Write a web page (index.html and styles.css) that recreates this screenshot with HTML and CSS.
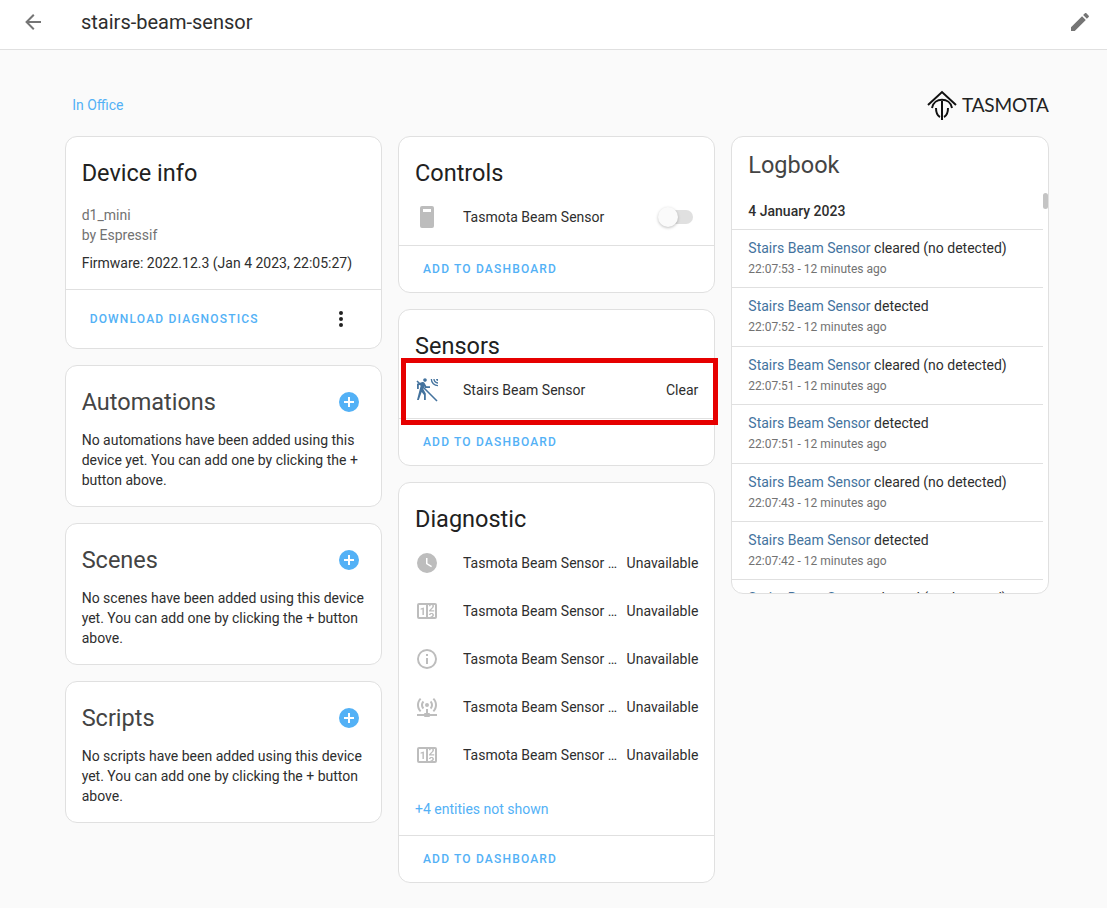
FILE: index.html
```html
<!DOCTYPE html>
<html lang="en">
<head>
    <meta charset="UTF-8">
    <meta name="viewport" content="width=device-width, initial-scale=1.0">
    <title>stairs-beam-sensor</title>
    <link rel="stylesheet" href="styles.css">
</head>
<body>

<header class="topbar">
    <svg class="topbar-icon" viewBox="0 0 24 24"><path d="M20,11V13H8L13.5,18.5L12.08,19.92L4.16,12L12.08,4.08L13.5,5.5L8,11H20Z"/></svg>
    <h1 class="topbar-title">stairs-beam-sensor</h1>
    <svg class="topbar-icon topbar-edit" viewBox="0 0 24 24"><path d="M20.71,7.04C21.1,6.65 21.1,6 20.71,5.63L18.37,3.29C18,2.9 17.35,2.9 16.96,3.29L15.12,5.12L18.87,8.87M3,17.25V21H6.75L17.81,9.93L14.06,6.18L3,17.25Z"/></svg>
</header>

<main class="page">
    <div class="page-top">
        <a class="area-link">In Office</a>
        <div class="logo">
            <svg class="logo-mark" viewBox="0 0 30 30">
                <path class="logo-line" d="M1,15 L15,2 L29,15"/>
                <path class="logo-line" d="M5,18 C7,7 23,7 25,18"/>
                <path class="logo-line" d="M9,18 C9,23 11,26 13,27 M21,18 C21,23 19,26 17,27"/>
                <path class="logo-line" d="M15,11 V30"/>
            </svg>
            <span class="logo-text">TASMOTA</span>
        </div>
    </div>

    <div class="columns">
        <div class="column">
            <section class="card">
                <h2 class="card-title">Device info</h2>
                <div class="device-text">
                    <div class="device-meta">d1_mini</div>
                    <div class="device-meta">by Espressif</div>
                    <div class="firmware">Firmware: 2022.12.3 (Jan 4 2023, 22:05:27)</div>
                </div>
                <div class="card-actions device-actions">
                    <a class="action-btn">Download diagnostics</a>
                    <svg class="dots" viewBox="0 0 24 24"><path d="M12,16A2,2 0 0,1 14,18A2,2 0 0,1 12,20A2,2 0 0,1 10,18A2,2 0 0,1 12,16M12,10A2,2 0 0,1 14,12A2,2 0 0,1 12,14A2,2 0 0,1 10,12A2,2 0 0,1 12,10M12,4A2,2 0 0,1 14,6A2,2 0 0,1 12,8A2,2 0 0,1 10,6A2,2 0 0,1 12,4Z"/></svg>
                </div>
            </section>

            <section class="card">
                <div class="card-head">
                    <h2 class="card-title muted">Automations</h2>
                    <svg class="add-icon" viewBox="0 0 24 24"><path d="M17,13H13V17H11V13H7V11H11V7H13V11H17M12,2A10,10 0 0,0 2,12A10,10 0 0,0 12,22A10,10 0 0,0 22,12A10,10 0 0,0 12,2Z"/></svg>
                </div>
                <p class="empty-text">No automations have been added using this device yet. You can add one by clicking the + button above.</p>
            </section>

            <section class="card">
                <div class="card-head">
                    <h2 class="card-title muted">Scenes</h2>
                    <svg class="add-icon" viewBox="0 0 24 24"><path d="M17,13H13V17H11V13H7V11H11V7H13V11H17M12,2A10,10 0 0,0 2,12A10,10 0 0,0 12,22A10,10 0 0,0 22,12A10,10 0 0,0 12,2Z"/></svg>
                </div>
                <p class="empty-text">No scenes have been added using this device yet. You can add one by clicking the + button above.</p>
            </section>

            <section class="card">
                <div class="card-head">
                    <h2 class="card-title muted">Scripts</h2>
                    <svg class="add-icon" viewBox="0 0 24 24"><path d="M17,13H13V17H11V13H7V11H11V7H13V11H17M12,2A10,10 0 0,0 2,12A10,10 0 0,0 12,22A10,10 0 0,0 22,12A10,10 0 0,0 12,2Z"/></svg>
                </div>
                <p class="empty-text">No scripts have been added using this device yet. You can add one by clicking the + button above.</p>
            </section>
        </div>

        <div class="column">
            <section class="card">
                <h2 class="card-title">Controls</h2>
                <div class="entities">
                    <div class="entity">
                        <svg class="entity-icon" viewBox="0 0 24 24"><path fill-rule="evenodd" d="M7,1H17A2,2 0 0,1 19,3V21A2,2 0 0,1 17,23H7A2,2 0 0,1 5,21V3A2,2 0 0,1 7,1M8,4V7H16V4H8Z"/></svg>
                        <span class="entity-name">Tasmota Beam Sensor</span>
                        <span class="switch"></span>
                    </div>
                </div>
                <div class="card-actions"><a class="action-btn">Add to dashboard</a></div>
            </section>

            <section class="card">
                <h2 class="card-title">Sensors</h2>
                <div class="entities">
                    <div class="entity entity-marked">
                        <svg class="entity-icon beam-icon" viewBox="0 0 24 24">
                            <path d="M10,0.2C9,0.2 8.2,1 8.2,2C8.2,3 9,3.8 10,3.8C11,3.8 11.8,3 11.8,2C11.8,1 11,0.2 10,0.2M15.67,1A7.33,7.33 0 0,0 23,8.33V7A6,6 0 0,1 17,1H15.67M18.33,1C18.33,3.58 20.42,5.67 23,5.67V4.33C21.16,4.33 19.67,2.84 19.67,1H18.33M21,1A2,2 0 0,0 23,3V1H21M7.92,4.03C7.75,4.03 7.58,4.06 7.42,4.11L2,5.8V11H3.8V7.33L5.91,6.67L2,22H3.8L6.67,13.89L9,17V22H10.8V15.59L8.31,11.05L9.04,8.18L10.12,10H15V8.2H11.38L9.38,4.87C9.08,4.37 8.54,4.03 7.92,4.03Z"/>
                            <path class="beam-slash" d="M2,3 L22,23"/>
                        </svg>
                        <span class="entity-name">Stairs Beam Sensor</span>
                        <span class="entity-state">Clear</span>
                        <span class="highlight"></span>
                    </div>
                </div>
                <div class="card-actions"><a class="action-btn">Add to dashboard</a></div>
            </section>

            <section class="card">
                <h2 class="card-title">Diagnostic</h2>
                <div class="entities">
                    <div class="entity">
                        <svg class="entity-icon" viewBox="0 0 24 24"><path d="M12,2A10,10 0 0,0 2,12A10,10 0 0,0 12,22A10,10 0 0,0 22,12A10,10 0 0,0 12,2M16.2,16.2L11,13V7H12.5V12.2L17,14.9L16.2,16.2Z"/></svg>
                        <span class="entity-name">Tasmota Beam Sensor …</span>
                        <span class="entity-state">Unavailable</span>
                    </div>
                    <div class="entity">
                        <svg class="entity-icon" viewBox="0 0 24 24"><path d="M4,4H20A2,2 0 0,1 22,6V18A2,2 0 0,1 20,20H4A2,2 0 0,1 2,18V6A2,2 0 0,1 4,4M4,6V18H11V6H4M20,18V6H18.76C19,6.54 18.95,7.07 18.95,7.13C18.88,7.8 18.41,8.5 18.24,8.75L15.91,11.3L19.23,11.28L19.24,12.5L14.04,12.47L14,11.47C14,11.47 17.05,8.24 17.2,7.95C17.34,7.67 17.91,6 16.5,6C15.27,6.05 15.41,7.3 15.41,7.3L13.87,7.31C13.87,7.31 13.88,6.65 14.25,6H13V18H15.58L15.57,17.14L16.54,17.13C16.54,17.13 17.45,16.97 17.46,16.08C17.5,15.08 16.65,15.08 16.5,15.08C16.37,15.08 15.43,15.13 15.43,15.95H13.91C13.91,15.95 13.95,13.89 16.5,13.89C19.1,13.89 18.96,15.91 18.96,15.91C18.96,15.91 19,17.16 17.85,17.63L18.37,18H20M8.92,16H7.42V10.2L5.62,10.76V9.53L8.76,8.41H8.92V16Z"/></svg>
                        <span class="entity-name">Tasmota Beam Sensor …</span>
                        <span class="entity-state">Unavailable</span>
                    </div>
                    <div class="entity">
                        <svg class="entity-icon" viewBox="0 0 24 24"><path d="M11,9H13V7H11M12,20C7.59,20 4,16.41 4,12C4,7.59 7.59,4 12,4C16.41,4 20,7.59 20,12C20,16.41 16.41,20 12,20M12,2A10,10 0 0,0 2,12A10,10 0 0,0 12,22A10,10 0 0,0 22,12A10,10 0 0,0 12,2M11,17H13V11H11V17Z"/></svg>
                        <span class="entity-name">Tasmota Beam Sensor …</span>
                        <span class="entity-state">Unavailable</span>
                    </div>
                    <div class="entity">
                        <svg class="entity-icon" viewBox="0 0 24 24"><path d="M4.93,2.93C3.12,4.74 2,7.24 2,10C2,12.76 3.12,15.26 4.93,17.07L6.34,15.66C4.89,14.22 4,12.22 4,10C4,7.79 4.89,5.78 6.34,4.34L4.93,2.93M19.07,2.93L17.66,4.34C19.11,5.78 20,7.79 20,10C20,12.22 19.11,14.22 17.66,15.66L19.07,17.07C20.88,15.26 22,12.76 22,10C22,7.24 20.88,4.74 19.07,2.93M7.76,5.76C6.67,6.85 6,8.35 6,10C6,11.65 6.67,13.15 7.76,14.24L9.17,12.83C8.45,12.11 8,11.11 8,10C8,8.89 8.45,7.89 9.17,7.17L7.76,5.76M16.24,5.76L14.83,7.17C15.55,7.89 16,8.89 16,10C16,11.11 15.55,12.11 14.83,12.83L16.24,14.24C17.33,13.15 18,11.65 18,10C18,8.35 17.33,6.85 16.24,5.76M12,8A2,2 0 0,0 10,10A2,2 0 0,0 12,12A2,2 0 0,0 14,10A2,2 0 0,0 12,8M11,14V18H10A1,1 0 0,0 9,19H2V21H9A1,1 0 0,0 10,22H14A1,1 0 0,0 15,21H22V19H15A1,1 0 0,0 14,18H13V14H11Z"/></svg>
                        <span class="entity-name">Tasmota Beam Sensor …</span>
                        <span class="entity-state">Unavailable</span>
                    </div>
                    <div class="entity">
                        <svg class="entity-icon" viewBox="0 0 24 24"><path d="M4,4H20A2,2 0 0,1 22,6V18A2,2 0 0,1 20,20H4A2,2 0 0,1 2,18V6A2,2 0 0,1 4,4M4,6V18H11V6H4M20,18V6H18.76C19,6.54 18.95,7.07 18.95,7.13C18.88,7.8 18.41,8.5 18.24,8.75L15.91,11.3L19.23,11.28L19.24,12.5L14.04,12.47L14,11.47C14,11.47 17.05,8.24 17.2,7.95C17.34,7.67 17.91,6 16.5,6C15.27,6.05 15.41,7.3 15.41,7.3L13.87,7.31C13.87,7.31 13.88,6.65 14.25,6H13V18H15.58L15.57,17.14L16.54,17.13C16.54,17.13 17.45,16.97 17.46,16.08C17.5,15.08 16.65,15.08 16.5,15.08C16.37,15.08 15.43,15.13 15.43,15.95H13.91C13.91,15.95 13.95,13.89 16.5,13.89C19.1,13.89 18.96,15.91 18.96,15.91C18.96,15.91 19,17.16 17.85,17.63L18.37,18H20M8.92,16H7.42V10.2L5.62,10.76V9.53L8.76,8.41H8.92V16Z"/></svg>
                        <span class="entity-name">Tasmota Beam Sensor …</span>
                        <span class="entity-state">Unavailable</span>
                    </div>
                    <a class="more-link">+4 entities not shown</a>
                </div>
                <div class="card-actions"><a class="action-btn">Add to dashboard</a></div>
            </section>
        </div>

        <div class="column">
            <section class="card logbook">
                <h2 class="card-title muted">Logbook</h2>
                <div class="log-scroll">
                    <div class="log-date">4 January 2023</div>
                    <div class="log-row">
                        <div class="log-line"><a class="log-name">Stairs Beam Sensor</a> cleared (no detected)</div>
                        <div class="log-time">22:07:53 - 12 minutes ago</div>
                    </div>
                    <div class="log-row">
                        <div class="log-line"><a class="log-name">Stairs Beam Sensor</a> detected</div>
                        <div class="log-time">22:07:52 - 12 minutes ago</div>
                    </div>
                    <div class="log-row">
                        <div class="log-line"><a class="log-name">Stairs Beam Sensor</a> cleared (no detected)</div>
                        <div class="log-time">22:07:51 - 12 minutes ago</div>
                    </div>
                    <div class="log-row">
                        <div class="log-line"><a class="log-name">Stairs Beam Sensor</a> detected</div>
                        <div class="log-time">22:07:51 - 12 minutes ago</div>
                    </div>
                    <div class="log-row">
                        <div class="log-line"><a class="log-name">Stairs Beam Sensor</a> cleared (no detected)</div>
                        <div class="log-time">22:07:43 - 12 minutes ago</div>
                    </div>
                    <div class="log-row">
                        <div class="log-line"><a class="log-name">Stairs Beam Sensor</a> detected</div>
                        <div class="log-time">22:07:42 - 12 minutes ago</div>
                    </div>
                    <div class="log-row">
                        <div class="log-line"><a class="log-name">Stairs Beam Sensor</a> cleared (no detected)</div>
                        <div class="log-time">22:07:41 - 12 minutes ago</div>
                    </div>
                    <span class="log-thumb"></span>
                </div>
            </section>
        </div>
    </div>
</main>

</body>
</html>
```

FILE: styles.css
```css
* {
    box-sizing: border-box;
}
body {
    margin: 0;
    height: 908px;
    overflow: hidden;
    font-family: Roboto, "Liberation Sans", sans-serif;
    font-size: 14px;
    line-height: 20px;
    color: #2e2e2e;
    background-color: #fafafa;
}

/* top bar */
.topbar {
    display: flex;
    align-items: center;
    height: 50px;
    padding: 0 15px 6px 21px;
    background-color: #fff;
    border-bottom: 1px solid #e0e0e0;
}
.topbar-icon {
    width: 24px;
    height: 24px;
    fill: #757575;
    flex: none;
}
.topbar-title {
    margin: 0 0 0 36px;
    font-size: 20px;
    font-weight: 400;
    line-height: 24px;
}
.topbar-edit {
    margin-left: auto;
}

/* page */
.page {
    padding-left: 64.67px;
}
.page-top {
    display: flex;
    justify-content: space-between;
    align-items: center;
    width: 984px;
    height: 86px;
    padding: 40px 0 16px 7.5px;
}
.area-link {
    color: #53b1f6;
}
.logo {
    display: flex;
    align-items: center;
    gap: 5px;
}
.logo-mark {
    width: 30px;
    height: 30px;
}
.logo-line {
    fill: none;
    stroke: #111;
    stroke-width: 2;
}
.logo-text {
    font-family: Lato, sans-serif;
    font-size: 19px;
    font-weight: 400;
    letter-spacing: -0.2px;
    line-height: 30px;
    color: #222;
}
.columns {
    display: grid;
    grid-template-columns: repeat(3, 317.33px);
    gap: 16px;
    align-items: start;
}
.column {
    display: flex;
    flex-direction: column;
    gap: 16px;
}

/* cards */
.card {
    background-color: #fff;
    border: 1px solid #e0e0e0;
    border-radius: 12px;
}
.card-title {
    margin: 0;
    padding: 20px 16px 0;
    font-size: 23.5px;
    font-weight: 400;
    line-height: 32px;
    color: #212121;
}
.muted {
    color: #444;
}
.card-head {
    display: flex;
    justify-content: space-between;
    align-items: flex-end;
}
.add-icon {
    width: 24px;
    height: 24px;
    margin: 0 20px 4px 0;
    fill: #53b1f6;
}
.empty-text {
    margin: 12px 0 16px;
    padding: 0 16px;
}
.device-text {
    padding: 16px 16px 16px;
}
.device-meta {
    color: #727272;
}
.firmware {
    margin-top: 8px;
}
.card-actions {
    display: flex;
    align-items: center;
    height: 47px;
    padding: 0 24px;
    border-top: 1px solid #e0e0e0;
}
.device-actions {
    justify-content: space-between;
    height: 59px;
    padding: 0 28px 0 24px;
}
.action-btn {
    font-size: 12px;
    font-weight: 500;
    letter-spacing: 1.18px;
    text-transform: uppercase;
    color: #53b1f6;
}
.dots {
    width: 24px;
    height: 24px;
    fill: #212121;
}

/* entity rows */
.entities {
    display: flex;
    flex-direction: column;
    gap: 8px;
    padding: 8px 16px;
}
.entity {
    position: relative;
    display: flex;
    align-items: center;
    height: 40px;
}
.entity-icon {
    flex: none;
    width: 24px;
    height: 24px;
    margin-right: 24px;
    fill: #bdbdbd;
}
.beam-icon {
    fill: #44739e;
}
.beam-slash {
    fill: none;
    stroke: #44739e;
    stroke-width: 1.6;
}
.entity-name {
    flex: 1;
    min-width: 0;
    white-space: nowrap;
    overflow: hidden;
}
.entity-state {
    flex: none;
    margin-left: 8px;
}
.more-link {
    margin: 16px 0 8px;
    color: #53b1f6;
}
.switch {
    position: relative;
    flex: none;
    width: 32px;
    height: 14px;
    margin-right: 5px;
    border-radius: 7px;
    background-color: #e0e0e0;
}
.switch::before {
    content: "";
    position: absolute;
    left: -3px;
    top: -3px;
    width: 20px;
    height: 20px;
    border-radius: 50%;
    background-color: #fafafa;
    box-shadow: 0 1px 3px rgba(0, 0, 0, 0.25);
}
.highlight {
    position: absolute;
    left: -14px;
    top: -12px;
    width: 317px;
    height: 67px;
    border: 5px solid #e60000;
}

/* logbook */
.logbook .card-title {
    padding-top: 12px;
}
.log-scroll {
    position: relative;
    height: 400px;
    margin-top: 12px;
    overflow: hidden;
    border-radius: 0 0 12px 12px;
}
.log-date {
    height: 37px;
    padding: 8px 16px;
    margin-right: 5px;
    font-weight: 500;
    border-bottom: 1px solid #e0e0e0;
}
.log-row {
    height: 58.4px;
    padding: 8px 16px 0;
    margin-right: 5px;
    border-bottom: 1px solid #e0e0e0;
}
.log-name {
    color: #44739e;
}
.log-time {
    margin-top: 1px;
    font-size: 12px;
    color: #727272;
}
.log-thumb {
    position: absolute;
    top: 0;
    right: 0;
    width: 5px;
    height: 16px;
    border-radius: 3px;
    background-color: #c4c4c4;
}
```
